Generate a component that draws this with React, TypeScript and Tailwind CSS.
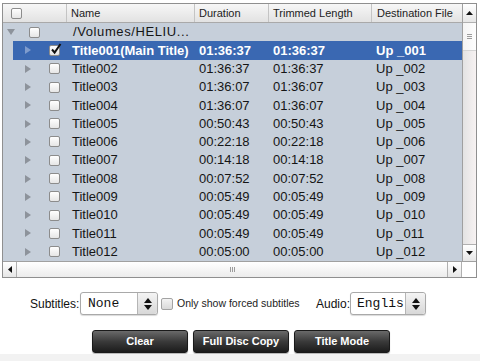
import React from 'react';

interface TitleRow {
  name: string;
  duration: string;
  trimmed: string;
  dest: string;
}

const titles: TitleRow[] = [
  { name: 'Title001(Main Title)', duration: '01:36:37', trimmed: '01:36:37', dest: 'Up _001' },
  { name: 'Title002', duration: '01:36:37', trimmed: '01:36:37', dest: 'Up _002' },
  { name: 'Title003', duration: '01:36:07', trimmed: '01:36:07', dest: 'Up _003' },
  { name: 'Title004', duration: '01:36:07', trimmed: '01:36:07', dest: 'Up _004' },
  { name: 'Title005', duration: '00:50:43', trimmed: '00:50:43', dest: 'Up _005' },
  { name: 'Title006', duration: '00:22:18', trimmed: '00:22:18', dest: 'Up _006' },
  { name: 'Title007', duration: '00:14:18', trimmed: '00:14:18', dest: 'Up _007' },
  { name: 'Title008', duration: '00:07:52', trimmed: '00:07:52', dest: 'Up _008' },
  { name: 'Title009', duration: '00:05:49', trimmed: '00:05:49', dest: 'Up _009' },
  { name: 'Title010', duration: '00:05:49', trimmed: '00:05:49', dest: 'Up _010' },
  { name: 'Title011', duration: '00:05:49', trimmed: '00:05:49', dest: 'Up _011' },
  { name: 'Title012', duration: '00:05:00', trimmed: '00:05:00', dest: 'Up _012' },
];

const Check = ({ checked = false }: { checked?: boolean }) => (
  <span className="relative block w-[11px] h-[11px] rounded-[2px] border border-[#8c8c8c] bg-gradient-to-b from-white to-[#e6e6e6] shrink-0">
    {checked && (
      <svg className="absolute left-[0px] top-[-3px]" width="12" height="12" viewBox="0 0 12 12">
        <path d="M2 6.5 L4.6 9.5 L10.5 1" fill="none" stroke="#111" strokeWidth="2" />
      </svg>
    )}
  </span>
);

const TriRight = ({ light = false }: { light?: boolean }) => (
  <svg width="6" height="8" viewBox="0 0 6 8" className="shrink-0">
    <path d="M0 0 L6 4 L0 8 Z" fill={light ? '#7f9ccd' : '#8d939b'} />
  </svg>
);

const Stepper = () => (
  <div className="w-[20px] h-full border-l border-[#b5b5b5] bg-gradient-to-b from-[#f4f4f4] to-[#d8d8d8] flex items-center justify-center rounded-r-[3px]">
    <svg width="8" height="12" viewBox="0 0 8 12">
      <path d="M0 5 L4 0 L8 5 Z" fill="#111" />
      <path d="M0 7 L4 12 L8 7 Z" fill="#111" />
    </svg>
  </div>
);

const App: React.FC = () => {
  return (
    <div className="w-[480px] h-[361px] bg-white flex flex-col overflow-hidden" style={{ fontFamily: '"Liberation Sans", Arial, sans-serif' }}>
      {/* Table */}
      <div className="ml-[2px] mt-[3px] w-[475px] border border-[#8f8f8f] flex flex-col">
        <div className="flex">
          <div className="w-[459px] flex flex-col">
            {/* Header */}
            <div className="h-[19px] flex bg-gradient-to-b from-[#f7f7f7] to-[#e2e2e2] border-b border-[#a9a9a9] text-[11px] text-[#222]">
              <div className="w-[63px] flex items-center pl-[8px]">
                <Check />
              </div>
              <div className="w-[128px] border-l border-[#c4c4c4] flex items-center pl-[4px]">Name</div>
              <div className="w-[74px] border-l border-[#c4c4c4] flex items-center pl-[4px]">Duration</div>
              <div className="w-[103px] border-l border-[#c4c4c4] flex items-center pl-[4px]">Trimmed Length</div>
              <div className="w-[91px] border-l border-[#c4c4c4] flex items-center pl-[5px]">Destination File</div>
            </div>
            {/* Body */}
            <div className="bg-[#c6cfda] text-[13px] text-[#151515] h-[238px] flex flex-col">
              <div className="h-[18.3px] flex items-center">
                <div className="w-[63px] flex items-center pl-[4px]">
                  <svg width="8" height="6" viewBox="0 0 8 6" className="shrink-0">
                    <path d="M0 0 L8 0 L4 6 Z" fill="#8d939b" />
                  </svg>
                  <span className="ml-[14px]"><Check /></span>
                </div>
                <div className="pl-[7px] tracking-[0.6px]">/Volumes/HELIU...</div>
              </div>
              {titles.map((t, i) => {
                const sel = i === 0;
                return (
                  <div key={t.name} className="h-[18.3px] flex pl-[10px]">
                    <div className={`flex-1 flex items-center ${sel ? 'bg-[#3a68b2] text-white font-bold' : ''}`}>
                      <div className="w-[53px] flex items-center pl-[12px]">
                        <TriRight light={sel} />
                        <span className="ml-[18px]"><Check checked={sel} /></span>
                      </div>
                      <div className="w-[128px] pl-[6px] whitespace-nowrap overflow-hidden">{t.name}</div>
                      <div className="w-[74px] pl-[5px]">{t.duration}</div>
                      <div className="w-[103px] pl-[5px]">{t.trimmed}</div>
                      <div className="w-[91px] pl-[5px]">{t.dest}</div>
                    </div>
                  </div>
                );
              })}
            </div>
          </div>
          {/* Vertical scrollbar */}
          <div className="w-[14px] border-l border-[#a0a0a0] flex flex-col bg-gradient-to-r from-[#e9e9e9] to-white">
            <div className="h-[19px] flex items-center justify-center border-b border-[#b0b0b0] bg-gradient-to-b from-white to-[#e6e6e6]">
              <svg width="7" height="4" viewBox="0 0 7 4"><path d="M0 4 L3.5 0 L7 4 Z" fill="#111" /></svg>
            </div>
            <div className="h-[28px] flex items-center justify-center bg-gradient-to-r from-[#f4f4f4] to-[#fdfdfd] border-b border-[#d4d4d4]">
              <div className="flex flex-col gap-[1px]">
                <span className="block w-[5px] h-px bg-[#9c9c9c]" />
                <span className="block w-[5px] h-px bg-[#9c9c9c]" />
                <span className="block w-[5px] h-px bg-[#9c9c9c]" />
              </div>
            </div>
            <div className="flex-1 bg-gradient-to-r from-[#e3e3e3] to-[#f7f2f2]" />
            <div className="h-[17px] flex items-center justify-center border-t border-[#b0b0b0] bg-gradient-to-b from-white to-[#e6e6e6]">
              <svg width="7" height="4" viewBox="0 0 7 4"><path d="M0 0 L7 0 L3.5 4 Z" fill="#111" /></svg>
            </div>
          </div>
        </div>
        {/* Horizontal scrollbar */}
        <div className="h-[16px] flex border-t border-[#a0a0a0]">
          <div className="w-[14px] flex items-center justify-center border-r border-[#b0b0b0] bg-gradient-to-b from-white to-[#e6e6e6]">
            <svg width="4" height="7" viewBox="0 0 4 7"><path d="M4 0 L0 3.5 L4 7 Z" fill="#111" /></svg>
          </div>
          <div className="flex-1 flex items-center justify-center bg-gradient-to-b from-white to-[#ececec]">
            <div className="flex gap-[1px]">
              <span className="block w-px h-[5px] bg-[#9c9c9c]" />
              <span className="block w-px h-[5px] bg-[#9c9c9c]" />
              <span className="block w-px h-[5px] bg-[#9c9c9c]" />
            </div>
          </div>
          <div className="w-[15px] flex items-center justify-center border-l border-r border-[#b0b0b0] bg-gradient-to-b from-white to-[#e6e6e6]">
            <svg width="4" height="7" viewBox="0 0 4 7"><path d="M0 0 L4 3.5 L0 7 Z" fill="#111" /></svg>
          </div>
          <div className="w-[14px] bg-white" />
        </div>
      </div>

      {/* Subtitles / audio row */}
      <div className="mt-[14px] h-[23px] flex items-center pl-[30px] text-[12px] text-[#111]">
        <span className="w-[50px]">Subtitles:</span>
        <div className="w-[78px] h-[23px] flex border border-[#a9a9a9] rounded-[3px] bg-white shadow-[0_1px_1px_rgba(0,0,0,0.15)]">
          <div className="flex-1 flex items-center pl-[7px] text-[13px]" style={{ fontFamily: '"Liberation Mono", "Courier New", monospace' }}>None</div>
          <Stepper />
        </div>
        <span className="ml-[3px] w-[12px] h-[12px] rounded-[2px] border border-[#a3a3a3] bg-gradient-to-b from-[#f3f3f3] to-[#d9d9d9]" />
        <span className="ml-[4px] w-[139px] text-[10.5px] text-[#222]">Only show forced subtitles</span>
        <span className="w-[34px]">Audio:</span>
        <div className="w-[76px] h-[23px] flex border border-[#a9a9a9] rounded-[3px] bg-white shadow-[0_1px_1px_rgba(0,0,0,0.15)]">
          <div className="flex-1 flex items-center pl-[6px] text-[13px]" style={{ fontFamily: '"Liberation Mono", "Courier New", monospace' }}>Englis</div>
          <Stepper />
        </div>
      </div>

      {/* Buttons */}
      <div className="mt-[15px] h-[23px] flex gap-[5px] pl-[92px]">
        {['Clear', 'Full Disc Copy', 'Title Mode'].map(label => (
          <button
            key={label}
            className="w-[96px] h-[23px] rounded-[3px] border border-[#1a1a1a] bg-gradient-to-b from-[#6a6a6a] via-[#3a3a3a] to-[#1c1c1c] text-white text-[11px] font-bold shadow-[0_1px_1px_rgba(0,0,0,0.3)]"
          >
            {label}
          </button>
        ))}
      </div>
      <div className="mt-[1px] flex-1 bg-[#f2f2f2]" />
    </div>
  );
};

export default App;
